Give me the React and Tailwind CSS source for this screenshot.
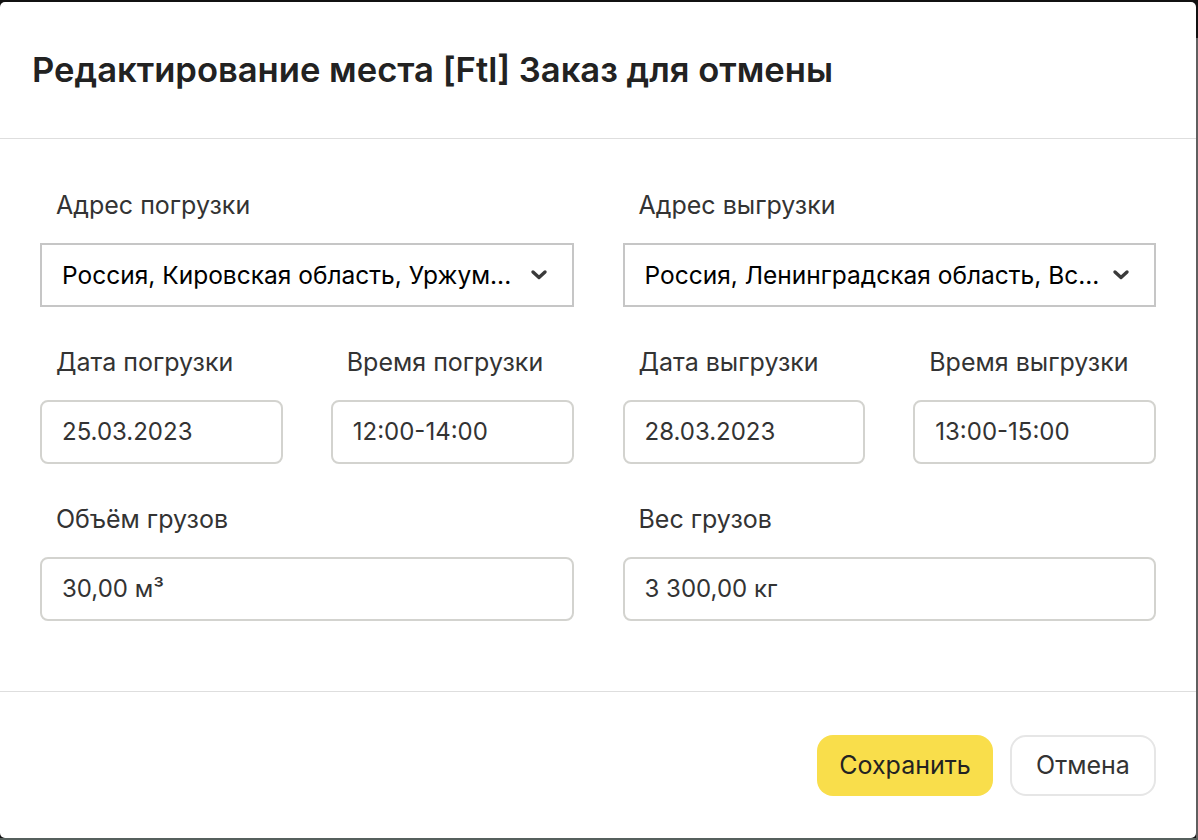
import React from "react";

const font = { fontFamily: '"Inter", "Noto Sans", sans-serif' };

function Label({ children }) {
  return (
    <div className="h-[28px] mb-[24px] pl-[16px] text-[25px] leading-[28px] text-[#333] whitespace-nowrap">
      {children}
    </div>
  );
}

function Chevron() {
  return (
    <svg width="18" height="12" viewBox="0 0 18 12" className="shrink-0">
      <polyline points="3,3 9,8.5 15,3" fill="none" stroke="#3a3a3a" strokeWidth="3.4" strokeLinecap="round" strokeLinejoin="round" />
    </svg>
  );
}

function Select({ value }) {
  return (
    <div className="h-[64px] border-2 border-[#c6c6c6] flex items-center pl-[20px] pr-[24px] justify-between">
      <span className="text-[24.5px] text-black whitespace-nowrap">{value}</span>
      <Chevron />
    </div>
  );
}

function Input({ value }) {
  return (
    <div className="h-[64px] border-2 border-[#d3d3cf] rounded-[8px] flex items-center pl-[20px]">
      <span className="text-[24px] text-[#333] whitespace-nowrap">{value}</span>
    </div>
  );
}

export default function App() {
  return (
    <div className="w-[1198px] h-[840px] bg-[#56605d] flex flex-col overflow-hidden" style={font}>
      <div className="h-[2px] bg-[#111]" />
      <div className="flex flex-1 bg-[#111]">
        <div className="flex-1 bg-white rounded-[5px] flex flex-col">
          <div className="h-[136px] flex items-center px-[32px]">
            <h1 className="text-[34.6px] font-semibold text-[#222] whitespace-nowrap">
              Редактирование места [Ftl] Заказ для отмены
            </h1>
          </div>
          <div className="h-[1px] bg-[#dedede]" />
          <div className="pt-[52px] pb-[70px] pl-[40px] pr-[40px] grid grid-cols-2 gap-x-[49px] gap-y-[41px]">
            <div>
              <Label>Адрес погрузки</Label>
              <Select value="Россия, Кировская область, Уржум..." />
            </div>
            <div>
              <Label>Адрес выгрузки</Label>
              <Select value="Россия, Ленинградская область, Вс..." />
            </div>
            <div className="grid grid-cols-2 gap-x-[48px]">
              <div>
                <Label>Дата погрузки</Label>
                <Input value="25.03.2023" />
              </div>
              <div>
                <Label>Время погрузки</Label>
                <Input value="12:00-14:00" />
              </div>
            </div>
            <div className="grid grid-cols-2 gap-x-[48px]">
              <div>
                <Label>Дата выгрузки</Label>
                <Input value="28.03.2023" />
              </div>
              <div>
                <Label>Время выгрузки</Label>
                <Input value="13:00-15:00" />
              </div>
            </div>
            <div>
              <Label>Объём грузов</Label>
              <Input value="30,00 м³" />
            </div>
            <div>
              <Label>Вес грузов</Label>
              <Input value="3 300,00 кг" />
            </div>
          </div>
          <div className="h-[1px] bg-[#dedede]" />
          <div className="flex-1 flex items-start justify-end gap-[17px] pt-[43px] pr-[40px]">
            <button className="h-[61px] w-[176px] rounded-[16px] bg-[#f9de4b] text-[25px] text-[#222] flex items-center justify-center">
              Сохранить
            </button>
            <button className="h-[61px] w-[146px] rounded-[16px] border-2 border-[#e6e6e6] bg-white text-[25px] text-[#333] flex items-center justify-center">
              Отмена
            </button>
          </div>
        </div>
        <div className="w-[2px] flex flex-col">
          <div className="h-[36px] bg-[#111]" />
          <div className="flex-1 bg-[#5f5f5f]" />
        </div>
      </div>
      <div className="h-[2px] bg-[#56605d]" />
    </div>
  );
}
